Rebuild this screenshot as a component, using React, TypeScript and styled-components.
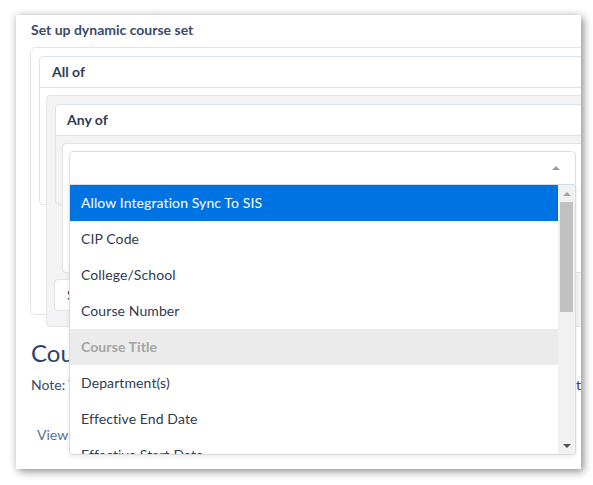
import styled, { createGlobalStyle } from "styled-components";

const GlobalStyle = createGlobalStyle`
  body {
    margin: 0;
    background: #ffffff;
    font-family: Lato, "Open Sans", sans-serif;
  }
`;

const options = [
  { label: "Allow Integration Sync To SIS", state: "active" },
  { label: "CIP Code", state: "" },
  { label: "College/School", state: "" },
  { label: "Course Number", state: "" },
  { label: "Course Title", state: "disabled" },
  { label: "Department(s)", state: "" },
  { label: "Effective End Date", state: "" },
  { label: "Effective Start Date", state: "" },
];

export default function App() {
  return (
    <>
      <GlobalStyle />
      <Page>
        <Card>
          <Title>Set up dynamic course set</Title>
          <OuterBox>
            <Group $height={149}>
              <GroupHeader $pad={12}>All of</GroupHeader>
              <GroupBody>
                <GrayBox>
                  <Group $height={101}>
                    <GroupHeader $pad={11}>Any of</GroupHeader>
                    <GroupBody>
                      <RuleBox>
                        <SelectWrap>
                          <SelectBox>
                            <Caret $dir="up" $color="#9a9a9a" />
                          </SelectBox>
                          <Dropdown>
                            <OptionList>
                              {options.map((o) => (
                                <Option key={o.label} $state={o.state}>
                                  {o.label}
                                </Option>
                              ))}
                            </OptionList>
                            <ScrollTrack>
                              <ScrollArrow>
                                <Caret $dir="up" $color="#a3a3a3" />
                              </ScrollArrow>
                              <ScrollThumb />
                              <ScrollSpacer />
                              <ScrollArrow>
                                <Caret $dir="down" $color="#505050" />
                              </ScrollArrow>
                            </ScrollTrack>
                          </Dropdown>
                        </SelectWrap>
                      </RuleBox>
                    </GroupBody>
                  </Group>
                  <SmallButton>Save rule</SmallButton>
                </GrayBox>
              </GroupBody>
            </Group>
          </OuterBox>
          <Heading>Courses in this set</Heading>
          <NoteRow>
            <span>Note: This list updates when the rules change.</span>
            <NoteLink>Export</NoteLink>
          </NoteRow>
          <ViewTab>View</ViewTab>
        </Card>
      </Page>
    </>
  );
}

const Page = styled.div`
  width: 593px;
  height: 485px;
  padding: 15px 0 0 16px;
  box-sizing: border-box;
  overflow: hidden;
`;

const Card = styled.div`
  width: 565px;
  height: 454px;
  background: #ffffff;
  box-sizing: border-box;
  padding: 7px 0 0 14px;
  overflow: hidden;
  box-shadow: 3px 3px 8px rgba(0, 0, 0, 0.38), -1px -1px 8px rgba(0, 0, 0, 0.12);
`;

const Title = styled.div`
  font-size: 14px;
  font-weight: 700;
  line-height: 16px;
  color: #3a4a6b;
  padding-left: 1px;
`;

const OuterBox = styled.div`
  margin-top: 9px;
  width: 640px;
  height: 268px;
  box-sizing: border-box;
  border: 1px solid #e4e4e4;
  border-radius: 5px;
  padding: 8px 0 0 8px;
`;

const Group = styled.div<{ $height: number }>`
  width: 620px;
  height: ${(p) => p.$height}px;
  box-sizing: border-box;
  border: 1px solid #dbe3ee;
  border-radius: 4px;
`;

const GroupHeader = styled.div<{ $pad: number }>`
  height: 30px;
  line-height: 30px;
  background: #ffffff;
  border-bottom: 1px solid #dbe3ee;
  border-radius: 4px 4px 0 0;
  padding-left: ${(p) => p.$pad}px;
  font-size: 14px;
  font-weight: 700;
  color: #2f3b52;
`;

const GroupBody = styled.div`
  padding: 7px 0 0 6px;
`;

const GrayBox = styled.div`
  width: 610px;
  height: 232px;
  box-sizing: border-box;
  background: #f3f3f3;
  border: 1px solid #e4e4e4;
  border-radius: 4px;
  padding: 8px 0 0 8px;
`;

const RuleBox = styled.div`
  width: 600px;
  height: 130px;
  box-sizing: border-box;
  background: #ffffff;
  border: 1px solid #e2e2e2;
  border-radius: 4px;
  padding: 7px 0 0 6px;
`;

const SelectWrap = styled.div`
  position: relative;
  width: 507px;
`;

const SelectBox = styled.div`
  height: 34px;
  box-sizing: border-box;
  border: 1px solid #d6dee9;
  border-radius: 4px 4px 0 0;
  background: #ffffff;
  display: flex;
  align-items: center;
  justify-content: flex-end;
  padding-right: 15px;
`;

const Caret = styled.span<{ $dir: "up" | "down"; $color: string }>`
  width: 0;
  height: 0;
  border-left: 4px solid transparent;
  border-right: 4px solid transparent;
  ${(p) =>
    p.$dir === "up"
      ? `border-bottom: 4px solid ${p.$color};`
      : `border-top: 4px solid ${p.$color};`}
`;

const Dropdown = styled.div`
  position: absolute;
  top: 100%;
  left: 0;
  z-index: 10;
  width: 507px;
  height: 270px;
  box-sizing: border-box;
  display: flex;
  background: #ffffff;
  border: 1px solid #dadada;
  border-top: none;
  border-radius: 0 0 4px 4px;
  box-shadow: 0 2px 4px rgba(0, 0, 0, 0.08);
  overflow: hidden;
`;

const OptionList = styled.div`
  flex: 1;
  overflow: hidden;
`;

const Option = styled.div<{ $state: string }>`
  height: 36px;
  line-height: 36px;
  padding-left: 11px;
  font-size: 14px;
  letter-spacing: 0.1px;
  white-space: nowrap;
  color: ${(p) =>
    p.$state === "active" ? "#ffffff" : p.$state === "disabled" ? "#a4a4a4" : "#2f3b52"};
  background: ${(p) =>
    p.$state === "active" ? "#0073e3" : p.$state === "disabled" ? "#ebebeb" : "#ffffff"};
  font-weight: ${(p) => (p.$state === "disabled" ? 700 : 400)};
`;

const ScrollTrack = styled.div`
  width: 17px;
  background: #f1f1f1;
  display: flex;
  flex-direction: column;
  align-items: center;
`;

const ScrollArrow = styled.div`
  height: 17px;
  width: 17px;
  display: flex;
  align-items: center;
  justify-content: center;
`;

const ScrollThumb = styled.div`
  width: 13px;
  height: 110px;
  background: #c1c1c1;
`;

const ScrollSpacer = styled.div`
  flex: 1;
`;

const SmallButton = styled.div`
  margin-top: 74px;
  width: 120px;
  height: 32px;
  line-height: 30px;
  box-sizing: border-box;
  margin-left: -1px;
  background: #ffffff;
  border: 1px solid #dbe3ee;
  border-radius: 4px;
  padding-left: 12px;
  font-size: 14px;
  color: #2f3b52;
`;

const Heading = styled.h2`
  margin: 24px 0 0;
  padding-left: 1px;
  font-size: 24px;
  font-weight: 400;
  line-height: 28px;
  color: #2d4270;
`;

const NoteRow = styled.div`
  margin-top: 8px;
  display: flex;
  justify-content: space-between;
  padding-left: 1px;
  font-size: 14px;
  line-height: 20px;
  color: #3b4a63;
  white-space: nowrap;
`;

const NoteLink = styled.span`
  color: #34407a;
`;

const ViewTab = styled.div`
  margin-top: 30px;
  padding-left: 7px;
  font-size: 14px;
  line-height: 20px;
  color: #5a6f94;
`;
